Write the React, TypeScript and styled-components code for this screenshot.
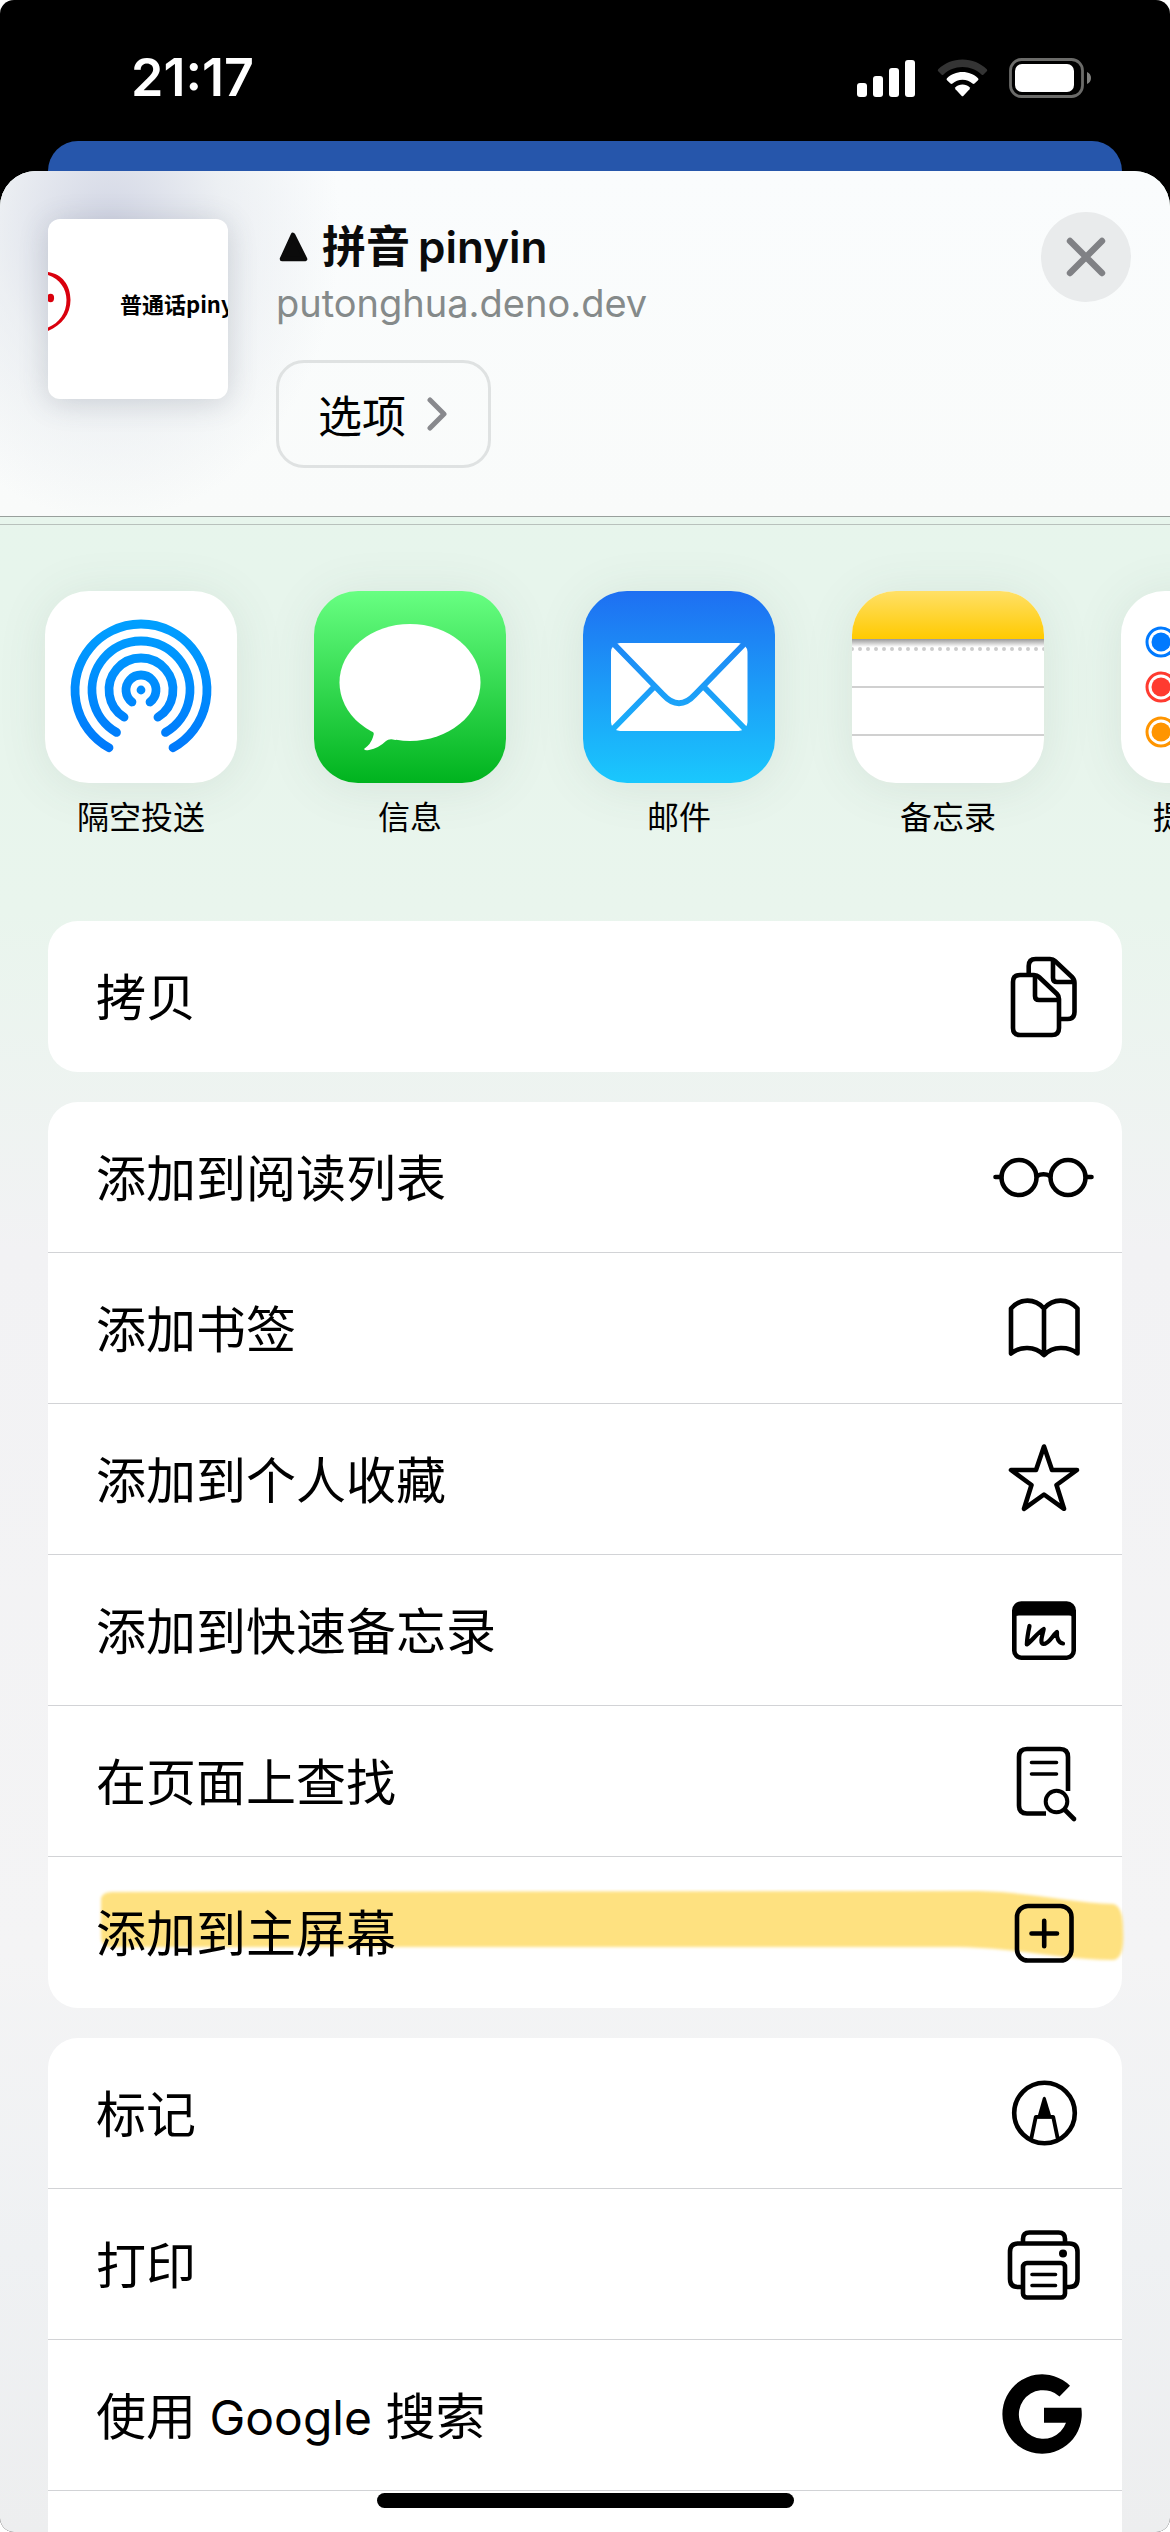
import React from "react";
import styled, { createGlobalStyle } from "styled-components";

const GlobalStyle = createGlobalStyle`
  * { box-sizing: border-box; }
  body {
    margin: 0;
    background: #fff;
    color: #000;
    font-family: Inter, "Noto Sans CJK SC", sans-serif;
  }
  button { font: inherit; color: inherit; }
`;

const Screen = styled.div`
  display: flex;
  flex-direction: column;
  height: 100vh;
  overflow: hidden;
  border-radius: 14px;
  background: #000;
`;

const StatusBar = styled.header`
  display: flex;
  flex: none;
  align-items: center;
  justify-content: space-between;
  height: 141px;
  padding: 14px 79px 0 131px;
  color: #fff;
`;

const Clock = styled.time`
  font-size: 52px;
  font-weight: 600;
  line-height: 60px;
`;

const StatusIcons = styled.div`
  display: flex;
  align-items: center;
  gap: 21px;
`;

const PageBehind = styled.div`
  flex: none;
  height: 66px;
  margin: 0 48px -36px;
  border-radius: 30px 30px 0 0;
  background: #2656ab;
`;

const Sheet = styled.main`
  display: flex;
  flex: 1;
  flex-direction: column;
  min-height: 0;
  overflow: hidden;
  border-radius: 36px 36px 0 0;
  background: linear-gradient(#e6f5ec 0, #e7f5ec 420px, #e9f5ed 740px, #f2f2f4 1080px, #f4f4f5 1780px, #eff1f3 2080px, #edeeef 100%);
`;

const SheetHeader = styled.section`
  display: flex;
  flex: none;
  align-items: flex-start;
  padding: 48px 39px 48px 48px;
  border-bottom: 1px solid #98a09c;
  background:
    radial-gradient(ellipse 230px 290px at 110px 60px, rgba(203, 207, 224, 0.85), rgba(225, 229, 235, 0.55) 50%, rgba(249, 251, 251, 0) 100%),
    linear-gradient(#fafcfd, #f9fbfa);
`;

const Thumbnail = styled.div`
  display: flex;
  flex: none;
  align-items: center;
  width: 180px;
  height: 180px;
  margin-right: 48px;
  overflow: hidden;
  border-radius: 12px;
  background: #fff;
  box-shadow: 0 4px 30px rgba(60, 70, 90, 0.2);
`;

const ThumbnailText = styled.span`
  flex: none;
  margin: -12px 0 0 47px;
  font-family: "Noto Sans CJK SC", sans-serif;
  font-size: 22px;
  font-weight: 700;
  line-height: 32px;
  white-space: nowrap;
`;

const ThumbnailLogo = styled.svg`
  flex: none;
  width: 25px;
  height: 62px;
  margin-top: -14px;
`;

const PageInfo = styled.div`
  flex: 1;
  min-width: 0;
`;

const Title = styled.h1`
  display: flex;
  align-items: center;
  gap: 14px;
  margin: 0;
  font-size: 44px;
  font-weight: 600;
  line-height: 56px;
  color: #0b0b0b;
`;

const Latin = styled.span`
  margin-left: 8px;
`;

const Domain = styled.p`
  margin: 0 0 29px;
  font-size: 38px;
  line-height: 56px;
  color: #858a8a;
`;

const OptionsButton = styled.button`
  display: flex;
  align-items: center;
  gap: 20px;
  height: 108px;
  padding: 0 40px 0 39px;
  border: 3px solid #dfe2e2;
  border-radius: 28px;
  background: transparent;
  font-size: 44px;
`;

const CloseButton = styled.button`
  display: grid;
  flex: none;
  place-items: center;
  width: 90px;
  height: 90px;
  margin-top: -7px;
  padding: 0;
  border: 0;
  border-radius: 50%;
  background: #e9ebec;
`;

const AppStrip = styled.nav`
  display: flex;
  flex: none;
  gap: 77px;
  height: 397px;
  margin-top: 7px;
  padding: 66px 0 0 45px;
  overflow: hidden;
  border-top: 1px solid #b8c1bc;
`;

const AppButton = styled.button`
  display: flex;
  flex: none;
  flex-direction: column;
  align-items: center;
  gap: 11px;
  width: 192px;
  padding: 0;
  border: 0;
  background: none;
  font-size: 32px;
  line-height: 48px;
`;

const AppTile = styled.span<{ $fill: string }>`
  width: 192px;
  height: 192px;
  overflow: hidden;
  border-radius: 44px;
  background: ${(p) => p.$fill};
  box-shadow: 0 4px 50px rgba(70, 90, 80, 0.1);

  svg { display: block; }
`;

const Actions = styled.div`
  display: flex;
  flex: 1;
  flex-direction: column;
  gap: 30px;
  min-height: 0;
  padding: 0 48px;
`;

const Card = styled.ul<{ $continues?: boolean }>`
  flex: ${(p) => (p.$continues ? "1 0 auto" : "none")};
  margin: 0;
  padding: 0;
  list-style: none;
  border-radius: ${(p) => (p.$continues ? "30px 30px 0 0" : "30px")};
  background: #fff;
`;

const CardItem = styled.li<{ $divided: boolean }>`
  position: relative;
  height: 151px;
  border-bottom: ${(p) => (p.$divided ? "1px solid #d2d3d6" : "0")};
`;

const ActionButton = styled.button`
  position: relative;
  display: flex;
  align-items: center;
  justify-content: space-between;
  width: 100%;
  height: 100%;
  padding: 0 23px 0 48px;
  border: 0;
  background: none;
  font-size: 50px;
  text-align: left;
`;

const ActionLabel = styled.span`
  padding-bottom: 5px;
`;

const Word = styled.span`
  font-size: 48px;
`;

const Marker = styled.svg`
  position: absolute;
  top: 32px;
  left: 50px;
  width: calc(100% - 46px);
  height: 76px;
`;

const ActionIcon = styled.svg`
  flex: none;
  width: 110px;
  height: 110px;
  fill: none;
  stroke: #000;
  stroke-width: 4.6;
  stroke-linecap: round;
  stroke-linejoin: round;
`;

const HomeIndicator = styled.div`
  position: fixed;
  bottom: 24px;
  left: 50%;
  width: 417px;
  height: 15px;
  margin-left: -208px;
  border-radius: 8px;
  background: #000;
`;

const SignalGlyph = () => (
  <svg width="59" height="38" viewBox="0 0 59 38" fill="#fff" aria-label="信号">
    <rect x="0" y="24" width="10" height="14" rx="3" />
    <rect x="16" y="17" width="10" height="21" rx="3" />
    <rect x="32" y="9" width="10" height="29" rx="3" />
    <rect x="48" y="1" width="10" height="37" rx="3" />
  </svg>
);

const WifiGlyph = () => (
  <svg width="51" height="38" viewBox="0 0 51 38" fill="#fff" aria-label="无线局域网">
    <path fill="#343434" d="M25.500 0.500 C35 .5 43.500 4.200 49.800 10.200 Q50.800 11.200 49.800 12.200 L46.500 15.500 Q45.500 16.500 44.500 15.500 C39.500 10.800 33 8 25.500 8 C18 8 11.500 10.800 6.500 15.500 Q5.500 16.500 4.500 15.500 L1.200 12.200 Q.2 11.200 1.200 10.200 C7.500 4.200 16 .5 25.500 .5Z" />
    <path d="M25.500 13 C31.500 13 37 15.300 41 19.200 Q42 20.200 41 21.200 L37.500 24.600 Q36.500 25.500 35.500 24.600 C32.800 22.200 29.500 20.800 25.500 20.800 C21.500 20.800 18.200 22.200 15.500 24.600 Q14.500 25.500 13.500 24.600 L10 21.200 Q9 20.200 10 19.200 C14 15.300 19.500 13 25.500 13Z" />
    <path d="M25.500 25.500 C28.300 25.500 30.700 26.500 32.500 28.200 Q33.400 29.200 32.500 30.200 L26.500 36.800 Q25.500 37.800 24.500 36.800 L18.500 30.200 Q17.600 29.200 18.500 28.200 C20.300 26.500 22.700 25.500 25.500 25.500Z" />
  </svg>
);

const BatteryGlyph = () => (
  <svg width="82" height="40" viewBox="0 0 82 40" aria-label="电池">
    <rect x="1.500" y="1.500" width="72" height="37" rx="11" fill="none" stroke="#6b6b69" strokeWidth="2.800" />
    <rect x="6" y="6" width="59" height="28" rx="7" fill="#fff" />
    <path d="M78 14 C80.500 15 82 17 82 20 C82 23 80.500 25 78 26Z" fill="#80807e" />
  </svg>
);

// An open ring around (96, 99); `gap` is half of the opening, in degrees.
const ring = (r: number, gap: number) => {
  const a = (gap * Math.PI) / 180;
  const dx = r * Math.sin(a);
  const y = 99 + r * Math.cos(a);
  return `M${96 - dx} ${y} A${r} ${r} 0 1 1 ${96 + dx} ${y}`;
};

const AirDropArt = () => (
  <svg width="192" height="192" viewBox="0 0 192 192">
    <defs>
      <linearGradient id="airdrop" gradientUnits="userSpaceOnUse" x1="0" y1="28" x2="0" y2="162">
        <stop offset="0" stopColor="#00a0ff" />
        <stop offset="1" stopColor="#0078fb" />
      </linearGradient>
    </defs>
    <g fill="none" stroke="url(#airdrop)" strokeWidth="8.800" strokeLinecap="round">
      <path d={ring(66, 29)} />
      <path d={ring(49, 30)} />
      <path d={ring(32, 32)} />
      <path d={ring(15, 37)} />
    </g>
    <circle cx="96" cy="99" r="4.400" fill="#008cff" />
  </svg>
);

const MessagesArt = () => (
  <svg width="192" height="192" viewBox="0 0 192 192" fill="#fff">
    <ellipse cx="96" cy="91.500" rx="70.500" ry="58.500" />
    <path d="M54 135 Q62 140 59 146 Q57 153 50 158 Q51 160 55 159 Q65 157 72 150 Q75 147 82 149 L86 130Z" />
  </svg>
);

const MailArt = () => (
  <svg width="192" height="192" viewBox="0 0 192 192">
    <mask id="envelope">
      <rect x="28" y="52" width="136.500" height="88" rx="9" fill="#fff" />
      <path
        d="M28 50 L80 103.500 Q96 121 112 103.500 L164 50 M28 140 L71 96 M164 140 L121 96"
        fill="none"
        stroke="#000"
        strokeWidth="5.800"
      />
    </mask>
    <rect width="192" height="192" fill="#fff" mask="url(#envelope)" />
  </svg>
);

const NotesArt = () => (
  <svg width="192" height="192" viewBox="0 0 192 192">
    <defs>
      <linearGradient id="pad" x1="0" y1="0" x2="0" y2="1">
        <stop offset="0" stopColor="#ffe067" />
        <stop offset="1" stopColor="#ffca00" />
      </linearGradient>
      <linearGradient id="padShade" x1="0" y1="0" x2="0" y2="1">
        <stop offset="0" stopColor="#999" />
        <stop offset="1" stopColor="#fff" />
      </linearGradient>
    </defs>
    <rect width="192" height="48" fill="url(#pad)" />
    <rect y="48" width="192" height="8" fill="url(#padShade)" />
    <path d="M0 58 H193" stroke="#ccc" strokeWidth="4" strokeLinecap="round" strokeDasharray="0 8" />
    <path d="M0 96 H192 M0 144 H192" stroke="#d0d0d0" strokeWidth="2" />
  </svg>
);

const RemindersArt = () => (
  <svg width="192" height="192" viewBox="0 0 192 192">
    {["#007aff", "#ff3b30", "#ff9500"].map((color, i) => (
      <g key={color}>
        <circle cx="40" cy={51 + i * 45} r="14" fill="none" stroke={color} strokeWidth="3" />
        <circle cx="40" cy={51 + i * 45} r="9.500" fill={color} />
        <path d={`M69 ${51 + i * 45} H192`} stroke="#d0d0d0" strokeWidth="2" />
      </g>
    ))}
  </svg>
);

const apps = [
  { label: "隔空投送", fill: "#fff", art: <AirDropArt /> },
  { label: "信息", fill: "linear-gradient(#68ff82, #00b31e)", art: <MessagesArt /> },
  { label: "邮件", fill: "linear-gradient(#1e6ff2, #1ac8fd)", art: <MailArt /> },
  { label: "备忘录", fill: "#fff", art: <NotesArt /> },
  { label: "提醒事项", fill: "#fff", art: <RemindersArt /> },
];

type Action = { id: string; label: React.ReactNode; icon: React.ReactNode; marked?: boolean };

const copyActions: Action[] = [
  {
    id: "copy",
    label: "拷贝",
    icon: (
      <>
        <path d="M31 33 H45 Q48 33 50 35 L68 52 Q70 54 70 57 V86 Q70 93 63 93 H31 Q24 93 24 86 V40 Q24 33 31 33Z" />
        <path d="M46 34 V54 Q46 58 50 58 H69" />
        <path strokeLinecap="butt" d="M39.700 31 V24 Q39.700 17 46.700 17 H61 Q64 17 66 19 L83 35 Q85.500 37.500 85.500 41 V70 Q85.500 77 78.500 77 H72" />
        <path d="M64 18 V36 Q64 40 68 40 H84" />
      </>
    ),
  },
];

const pageActions: Action[] = [
  {
    id: "reading-list",
    label: "添加到阅读列表",
    icon: (
      <>
        <circle cx="30" cy="55.500" r="17.500" />
        <circle cx="79" cy="55.500" r="17.500" />
        <path d="M6.500 55 H12 M97 55 H102.500 M48 54 Q54.500 50.500 61 54" />
      </>
    ),
  },
  {
    id: "bookmark",
    label: "添加书签",
    icon: <path d="M22 35.500 C31 25 46 25 55 35.500 C64 25 79 25 88.500 35.500 V80.500 C79 73 64 73 55 82 C46 73 31 73 22 80.500Z M55 35.500 V82" />,
  },
  {
    id: "favourite",
    label: "添加到个人收藏",
    icon: <path d="M55 22.500 L63 46 H88 L67.500 61 L75 84.800 L55 70.500 L35 84.800 L42.500 61 L22 46 H47Z" />,
  },
  {
    id: "quick-note",
    label: "添加到快速备忘录",
    icon: (
      <>
        <rect x="25.300" y="28.500" width="59.400" height="54.200" rx="7" />
        <path fill="#000" stroke="none" d="M25 34 Q25 28 31 28 H79 Q85 28 85 34 V44 Q84 40.500 80 40.500 H30 Q26 40.500 25 44Z" />
        <path strokeWidth="4.200" d="M40.500 51 C39 58 38 64 37.800 69.500 C43 66 49 57 54.700 54 C54 59 50 68 54.500 69 C60 69 63 61 68 57 C67.500 62 69 68 74 68.500" />
      </>
    ),
  },
  {
    id: "find",
    label: "在页面上查找",
    icon: (
      <>
        <path strokeLinecap="butt" d="M79 65 V31 Q79 23 71 23 H38 Q30 23 30 31 V79.500 Q30 87.500 38 87.500 H57" />
        <path strokeWidth="3.600" d="M42.500 36.500 H67.500 M42.500 48 H67.500" />
        <circle cx="67.500" cy="75.500" r="10.800" strokeWidth="4" />
        <path d="M76 84 L85 93" />
      </>
    ),
  },
  {
    id: "home-screen",
    label: "添加到主屏幕",
    marked: true,
    icon: (
      <>
        <rect x="28" y="28" width="54.500" height="54.500" rx="11" />
        <path d="M42.500 55.500 H68 M55.200 42.700 V68.200" />
      </>
    ),
  },
];

const documentActions: Action[] = [
  {
    id: "markup",
    label: "标记",
    icon: (
      <>
        <circle cx="55.500" cy="55" r="30.300" />
        <path fill="#000" stroke="none" d="M53.800 40 Q55.300 37.500 56.800 40 L63 60.500 H48Z" />
        <path strokeWidth="3.800" d="M42.500 79.500 L46.800 58.800 H64.200 L68.500 79.500" />
      </>
    ),
  },
  {
    id: "print",
    label: "打印",
    icon: (
      <>
        <path strokeLinecap="butt" d="M33 78 H29 Q21 78 21 70 V43 Q21 34.500 29 34.500 H80.500 Q88.500 34.500 88.500 43 V70 Q88.500 78 80.500 78 H77" />
        <path strokeLinecap="butt" d="M34 34 V30 Q34 23.500 40.500 23.500 H69.500 Q76 23.500 76 30 V34" />
        <rect x="34" y="54" width="42" height="34.500" rx="4" />
        <path strokeWidth="3.600" d="M43 65.500 H66.500 M43 76.500 H66.500" />
        <circle cx="74" cy="44.500" r="4" fill="#000" stroke="none" />
      </>
    ),
  },
  {
    id: "google",
    label: <>使用<Word> Google </Word>搜索</>,
    icon: <path fill="#000" stroke="none" d="M81 25.800 A39.700 39.700 0 1 0 92.300 47.800 H55 V62.800 H77 A24.300 24.300 0 1 1 70.500 36.500Z" />,
  },
];

const ActionCard = ({ actions, continues = false }: { actions: Action[]; continues?: boolean }) => (
  <Card $continues={continues}>
    {actions.map(({ id, label, icon, marked }, i) => (
      <CardItem key={id} $divided={continues || i < actions.length - 1}>
        {marked && (
          <Marker viewBox="0 0 1028 76" preserveAspectRatio="none" aria-hidden="true">
            <defs>
              <filter id="soft"><feGaussianBlur stdDeviation="1.500" /></filter>
            </defs>
            <path
              filter="url(#soft)"
              fill="#fee180"
              d="M3 9 Q5 3 14 3 L880 2 C930 3 975 14 1015 15 Q1025 17 1025 40 Q1027 70 1015 71 C965 71 930 60 860 58 L14 58 Q3 58 3 48Z"
            />
          </Marker>
        )}
        <ActionButton type="button">
          <ActionLabel>{label}</ActionLabel>
          <ActionIcon viewBox="0 0 110 110" aria-hidden="true">{icon}</ActionIcon>
        </ActionButton>
      </CardItem>
    ))}
  </Card>
);

export default function App() {
  return (
    <>
      <GlobalStyle />
      <Screen>
        <StatusBar>
          <Clock>21:17</Clock>
          <StatusIcons>
            <SignalGlyph />
            <WifiGlyph />
            <BatteryGlyph />
          </StatusIcons>
        </StatusBar>
        <PageBehind />
        <Sheet>
          <SheetHeader>
            <Thumbnail>
              <ThumbnailLogo viewBox="0 0 25 62" aria-hidden="true">
                <path fill="#d9000d" d="M0 1 C14 3 22.500 14 22.500 29 C22.500 43 14 54 0 60 V56.500 C11 52 18.500 42 18.500 29 C18.500 18 12 8 0 4Z" />
                <ellipse cx="2.500" cy="27" rx="3.600" ry="4.200" fill="#d9000d" />
              </ThumbnailLogo>
              <ThumbnailText>普通话pinyin</ThumbnailText>
            </Thumbnail>
            <PageInfo>
              <Title>
                <svg width="32" height="30" viewBox="0 0 32 30" aria-hidden="true">
                  <path d="M17 3 L29 27 H6Z" fill="#0b0b0b" stroke="#0b0b0b" strokeWidth="4.600" strokeLinejoin="round" />
                </svg>
                <span>拼音<Latin>pinyin</Latin></span>
              </Title>
              <Domain>putonghua.deno.dev</Domain>
              <OptionsButton type="button">
                选项
                <svg width="22" height="34" viewBox="0 0 22 34" aria-hidden="true">
                  <path d="M4 3 L18 17 L4 31" fill="none" stroke="#88898d" strokeWidth="5" strokeLinecap="round" strokeLinejoin="round" />
                </svg>
              </OptionsButton>
            </PageInfo>
            <CloseButton type="button" aria-label="关闭">
              <svg width="40" height="40" viewBox="0 0 40 40" aria-hidden="true">
                <path d="M4 4 L36 36 M36 4 L4 36" stroke="#808185" strokeWidth="6.400" strokeLinecap="round" />
              </svg>
            </CloseButton>
          </SheetHeader>
          <AppStrip>
            {apps.map(({ label, fill, art }) => (
              <AppButton key={label} type="button">
                <AppTile $fill={fill}>{art}</AppTile>
                {label}
              </AppButton>
            ))}
          </AppStrip>
          <Actions>
            <ActionCard actions={copyActions} />
            <ActionCard actions={pageActions} />
            <ActionCard actions={documentActions} continues />
          </Actions>
        </Sheet>
        <HomeIndicator />
      </Screen>
    </>
  );
}
